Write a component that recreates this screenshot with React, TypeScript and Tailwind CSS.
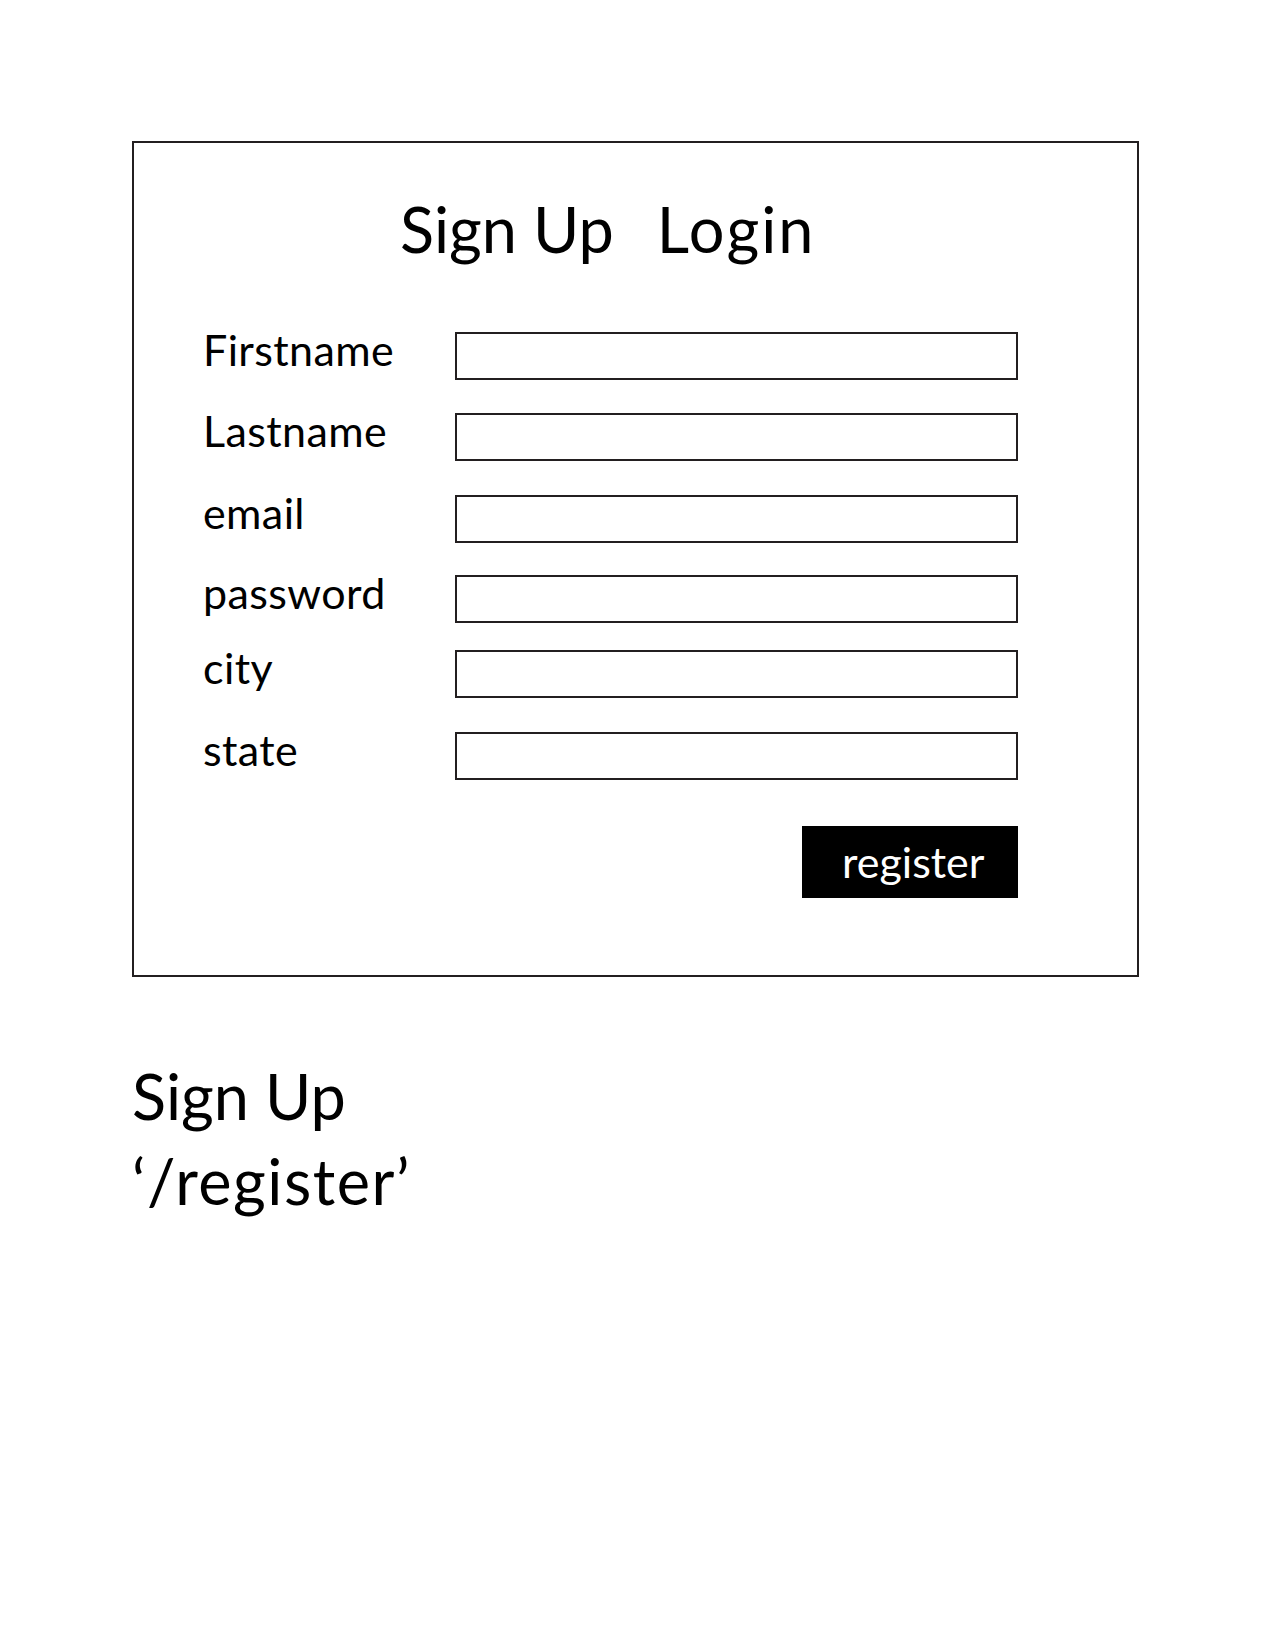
const fields = [
  { label: 'Firstname', gap: 'mt-0' },
  { label: 'Lastname', gap: 'mt-[33px]' },
  { label: 'email', gap: 'mt-[34px]' },
  { label: 'password', gap: 'mt-[32px]' },
  { label: 'city', gap: 'mt-[27px]' },
  { label: 'state', gap: 'mt-[34px]' },
]

function FieldRow({ label, gap }: { label: string; gap: string }) {
  return (
    <div className={`flex items-start ${gap}`}>
      <label className="w-[252px] shrink-0 text-[43px] leading-[35px] tracking-[0.4px] text-black">{label}</label>
      <input
        type="text"
        className="h-[48px] w-[563px] border-2 border-[#231f20] bg-white px-3 text-[24px] outline-none"
      />
    </div>
  )
}

export default function App() {
  return (
    <div
      className="min-h-[1651px] w-full bg-white pl-[132px] pt-[141px] text-black"
      style={{ fontFamily: 'Lato, "Open Sans", sans-serif' }}
    >
      <div className="flex h-[836px] w-[1007px] flex-col border-2 border-[#231f20]">
        {/* tabs */}
        <div className="mt-[54px] flex pl-[266px] text-[63px] leading-[63px]">
          <span>Sign Up</span>
          <span className="ml-[43px] tracking-[2px]">Login</span>
        </div>

        {/* form */}
        <form className="mt-[72px] flex flex-col pl-[69px]" onSubmit={(e) => e.preventDefault()}>
          {fields.map((f) => (
            <FieldRow key={f.label} label={f.label} gap={f.gap} />
          ))}
          <div className="mt-[46px] flex w-[815px] justify-end">
            <button
              type="submit"
              className="h-[72px] w-[216px] bg-black pl-[40px] text-left text-[43px] leading-[68px] text-white"
            >
              register
            </button>
          </div>
        </form>
      </div>

      <div className="mt-[76px] text-[63px] leading-[85px]">
        <div>Sign Up</div>
        <div className="tracking-[1.5px]">‘/register’</div>
      </div>
    </div>
  )
}
